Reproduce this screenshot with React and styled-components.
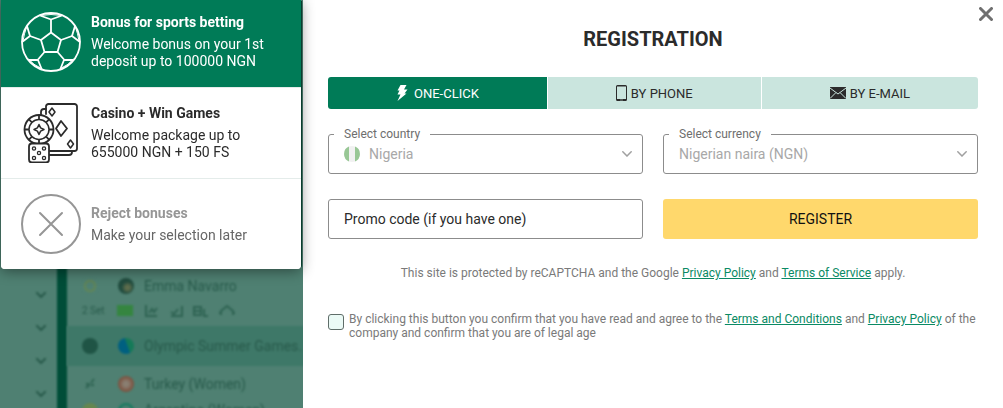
import React from 'react';
import styled, { createGlobalStyle } from 'styled-components';

const GlobalStyle = createGlobalStyle`
  *, *::before, *::after { box-sizing: border-box; }
  body {
    margin: 0;
    background: #fff;
    color: #2b2b2b;
    font: 14px/17px Roboto, "Liberation Sans", sans-serif;
  }
  button, input, select { font: inherit; color: inherit; }
`;

/* ---------- dimmed page behind the dialog ---------- */

const Backdrop = styled.div`
  position: fixed;
  inset: 0;
  z-index: -1;
  display: grid;
  grid-template-columns: 57px 10px 1fr;
  overflow: hidden;
  background: #4f8072;
  color: #285a4b;
`;

const SideNav = styled.div`
  display: flex;
  flex-direction: column;
  align-items: flex-end;
  padding: 278px 4px 0 0;
  filter: blur(1px);
`;

const NavRow = styled.div`
  flex: none;
  width: 24px;
  height: 33px;
  display: flex;
  align-items: center;
  justify-content: center;
`;

const Divider = styled.div`
  background: #004d38;
  filter: blur(1px);
`;

const Matches = styled.div`
  padding-top: 269px;
  filter: blur(1px);
`;

const MatchRow = styled.div`
  height: ${(p) => p.$height}px;
  display: grid;
  grid-template-columns: 16px 16px 1fr;
  column-gap: 20px;
  align-items: center;
  padding-left: 15px;
  background: ${(p) => (p.$active ? '#3e7868' : 'transparent')};
  font-size: 14px;
  white-space: nowrap;
`;

const TeamName = styled.span`
  margin-left: -10px;
`;

const Dot = styled.span`
  width: 16px;
  height: 16px;
  border-radius: 50%;
  background: ${(p) => p.$fill};
`;

const StatRow = styled.div`
  height: 23px;
  display: flex;
  align-items: center;
  gap: 12px;
  padding: 0 0 8px 15px;
  font-size: 10px;
`;

const Badge = styled.span`
  width: 16px;
  height: 11px;
  background: #358540;
`;

/* ---------- dialog ---------- */

const Dialog = styled.div`
  display: grid;
  grid-template-columns: 303px minmax(0, 1fr);
  min-height: 100vh;
`;

const BonusList = styled.div`
  position: relative;
  z-index: 1;
  align-self: start;
  margin: 0 2px 0 1px;
  overflow: hidden;
  border-radius: 0 0 4px 4px;
  background: #fff;
  box-shadow: 2px 0 0 -1px #0a3d2f, 0 2px 14px rgba(0, 0, 0, 0.45);
`;

const BonusOption = styled.button`
  width: 100%;
  min-height: ${(p) => (p.$active ? 87 : 91)}px;
  display: grid;
  grid-template-columns: 60px 1fr;
  column-gap: 10px;
  align-items: center;
  padding: ${(p) => (p.$active ? '0 16px 3px 20px' : '0 16px 0 20px')};
  border: 0;
  background: ${(p) => (p.$active ? '#007b57' : '#fff')};
  color: ${(p) => (p.$active ? '#fff' : p.$muted ? '#666' : '#2b2b2b')};
  text-align: left;
  cursor: pointer;

  & + & { border-top: ${(p) => (p.$muted ? '1px solid #e4ecea' : '0')}; }
`;

const BonusText = styled.span`
  display: grid;
  row-gap: 5px;
`;

const BonusTitle = styled.strong`
  font-weight: 700;
  color: ${(p) => (p.$muted ? '#969696' : 'inherit')};
`;

const Panel = styled.main`
  position: relative;
  padding: 27px 25px;
  background: #fff;
`;

const CloseButton = styled.button`
  position: absolute;
  top: 4px;
  right: 7px;
  width: 20px;
  height: 20px;
  display: grid;
  place-items: center;
  padding: 0;
  border: 0;
  background: none;
  cursor: pointer;
`;

const Title = styled.h1`
  margin: 0 0 26px;
  font-size: 20px;
  line-height: 24px;
  font-weight: 700;
  text-align: center;
`;

const Tabs = styled.div`
  display: flex;
  gap: 1px;
  overflow: hidden;
  border-radius: 3px;
`;

const Tab = styled.button`
  flex: 1 0 auto;
  height: 32px;
  display: flex;
  align-items: center;
  justify-content: center;
  gap: ${(p) => p.$gap}px;
  padding: 0;
  border: 0;
  background: ${(p) => (p.$active ? '#007b57' : '#cae5de')};
  color: ${(p) => (p.$active ? '#fff' : '#2b2b2b')};
  font-size: 13px;
  cursor: pointer;
`;

const Form = styled.form`
  margin-top: 18px;
`;

const Fields = styled.div`
  display: grid;
  grid-template-columns: repeat(2, minmax(0, 1fr));
  gap: 25px 20px;
`;

const SelectBox = styled.fieldset`
  min-width: 0;
  margin: 0;
  padding: 0 10px 6px 15px;
  border: 1px solid #8c8c8c;
  border-radius: 3px;
`;

const Legend = styled.legend`
  margin-left: -10px;
  padding: 0 10px;
  font-size: 12px;
  line-height: 14px;
  color: #6e6e6e;
`;

const SelectRow = styled.div`
  height: 26px;
  display: flex;
  align-items: center;
  gap: 9px;
`;

const Select = styled.select`
  flex: 1;
  min-width: 0;
  padding: 0;
  border: 0;
  outline: 0;
  appearance: none;
  background: none;
  color: #a8a8a8;
`;

const PromoInput = styled.input`
  width: 100%;
  height: 40px;
  padding: 0 15px;
  border: 1px solid #8c8c8c;
  border-radius: 3px;
  background: #fff;
  &::placeholder { color: #2b2b2b; opacity: 1; }
`;

const RegisterButton = styled.button`
  height: 40px;
  border: 0;
  border-radius: 3px;
  background: #ffd86c;
  color: #111;
  cursor: pointer;
`;

const Notice = styled.p`
  margin: 27px 0 32px;
  font-size: 12px;
  line-height: 14px;
  color: #7a7a7a;
  text-align: center;
`;

const Agreement = styled.div`
  display: grid;
  grid-template-columns: 16px 1fr;
  column-gap: 5px;
  font-size: 12px;
  line-height: 14px;
  color: #7a7a7a;
`;

const Checkbox = styled.input`
  appearance: none;
  width: 16px;
  height: 16px;
  margin: 2px 0 0;
  border: 1px solid #5f6d69;
  border-radius: 3px;
  background: #ebfaf6;
`;

const Link = styled.a`
  color: #0a8a64;
  text-decoration: underline;
`;

/* ---------- drawings ---------- */

const BallIcon = () => (
  <svg width="60" height="60" viewBox="0 0 60 60" fill="none" stroke="#fff" strokeWidth="1.800" strokeLinejoin="round" aria-hidden="true">
    <circle cx="30" cy="30" r="29" />
    <path d="M30 20.500l10 7.500-3.500 12h-13L20 28z" />
    <path d="M30 20.500V7.500M40 28l11-4M36.500 40l6.500 7.500M23.500 40L17 47.500M20 28L9 24" />
    <path d="M19 3.500l11 4 11-4" />
    <path d="M54 14l-3 10 8 6M6 14l3 10-8 6" />
    <path d="M52.500 48H43l-4 10M7.500 48H17l4 10" />
    <path d="M19 3.500q11-2 22 0M54 14q3 8 4 15M6 14q-3 8-4 15M52.500 47q-5 6-12 9M7.500 47q5 6 12 9" strokeWidth="1" />
  </svg>
);

const CasinoIcon = () => (
  <svg width="60" height="60" viewBox="0 0 60 60" fill="none" stroke="#2b2b2b" strokeWidth="1.800" strokeLinejoin="round" strokeLinecap="round" aria-hidden="true">
    <path d="M25 11V3.500A2.500 2.500 0 0 1 27.500 1H53.500A2.500 2.500 0 0 1 56 3.500V45.500A2.500 2.500 0 0 1 53.500 48H28" />
    <path d="M25 6h-2a3 3 0 0 0-3 3v3M28 52h20a3 3 0 0 0 3-3" />
    <path d="M40 18l6 7.500-6 7.500-5-7.500z" />
    <path d="M31 5l3 4-3 4-3-4zM49.500 37l3 4-3 4-3-4z" strokeWidth="1.500" />
    <circle cx="18" cy="26.500" r="14.500" fill="#fff" />
    <circle cx="18" cy="26.500" r="10" strokeWidth="1.500" />
    <path d="M18 21.500l1.600 3.400 3.400 1.600-3.400 1.600L18 31.500l-1.600-3.400-3.400-1.600 3.400-1.600z" strokeWidth="1.500" />
    <path d="M18 12v4.500M18 36.500V41M3.500 26.500H8M28 26.500h4.500M7.700 16.200l3.200 3.200M25.100 33.600l3.200 3.200M7.700 36.800l3.200-3.200M25.100 19.400l3.200-3.200" strokeLinecap="butt" />
    <rect x="8" y="40.500" width="20" height="19" rx="3" fill="#fff" />
    <g strokeWidth="1.300">
      <circle cx="13" cy="45.500" r="1.600" />
      <circle cx="23" cy="45.500" r="1.600" />
      <circle cx="18" cy="50" r="1.600" />
      <circle cx="13" cy="55" r="1.600" />
      <circle cx="23" cy="55" r="1.600" />
    </g>
  </svg>
);

const RejectIcon = () => (
  <svg width="60" height="60" viewBox="0 0 60 60" fill="none" stroke="#969696" strokeWidth="2" strokeLinecap="round" aria-hidden="true">
    <circle cx="30" cy="30" r="29" />
    <path d="M19 19l22 22M41 19L19 41" />
  </svg>
);

const BoltIcon = () => (
  <svg width="12" height="16" viewBox="0 0 12 16" fill="currentColor" aria-hidden="true">
    <path d="M4.500 0H10.500L8 4.500H11.500L8.500 8.500h2L1.500 16l3-6.500H1.500L3.500 5.500H1.500z" />
  </svg>
);

const PhoneIcon = () => (
  <svg width="11" height="16" viewBox="0 0 11 16" aria-hidden="true">
    <path fillRule="evenodd" fill="currentColor" d="M1.500 0h8A1.500 1.500 0 0 1 11 1.500v13A1.500 1.500 0 0 1 9.500 16h-8A1.500 1.500 0 0 1 0 14.500v-13A1.500 1.500 0 0 1 1.500 0zM1 1.500V14h9V1.500zM4 14.700v.6h3v-.6z" />
  </svg>
);

const MailIcon = () => (
  <svg width="16" height="12" viewBox="0 0 16 12" aria-hidden="true">
    <rect width="16" height="12" fill="currentColor" />
    <path d="M0 1l8 6 8-6M0 11.500l5.800-5.800M16 11.500l-5.800-5.800" fill="none" stroke="#cae5de" strokeWidth="1" />
  </svg>
);

const CloseIcon = () => (
  <svg width="14" height="14" viewBox="0 0 14 14" aria-hidden="true">
    <path d="M1.500 1.500l11 11M12.500 1.500l-11 11" stroke="#6f6f6f" strokeWidth="3" strokeLinecap="round" />
  </svg>
);

const Chevron = ({ color = '#a0a0a0', width = 1.5 }) => (
  <svg width="10" height="6" viewBox="0 0 10 6" fill="none" stroke={color} strokeWidth={width} strokeLinecap="round" aria-hidden="true">
    <path d="M.8.8L5 5 9.200.8" />
  </svg>
);

const NigeriaFlag = () => (
  <svg width="16" height="16" viewBox="0 0 16 16" aria-hidden="true">
    <circle cx="8" cy="8" r="8" fill="#f1f1f1" />
    <path d="M5 .6a8 8 0 0 0 0 14.800zM11 .6a8 8 0 0 1 0 14.800z" fill="#98c795" />
  </svg>
);

const StatsDrawing = () => (
  <svg width="90" height="12" viewBox="0 0 90 12" fill="none" stroke="#2f6353" strokeWidth="2" aria-hidden="true">
    <path d="M1 0v11h11M4 8l3-4 2 3 3-4M26 11h11V1M26 7l3 2 4-5M49 2h7v8h-7zM49 6h7M59 4v7h4M74 8h3M76 10V6l6-5 6 5v4M87 8h3" />
  </svg>
);

const BONUSES = [
  { id: 'sports', title: 'Bonus for sports betting', text: 'Welcome bonus on your 1st deposit up to 100000 NGN', Icon: BallIcon, active: true },
  { id: 'casino', title: 'Casino + Win Games', text: 'Welcome package up to 655000 NGN + 150 FS', Icon: CasinoIcon },
  { id: 'reject', title: 'Reject bonuses', text: 'Make your selection later', Icon: RejectIcon, muted: true },
];

const TABS = [
  { label: 'ONE-CLICK', Icon: BoltIcon, gap: 6, active: true },
  { label: 'BY PHONE', Icon: PhoneIcon, gap: 4 },
  { label: 'BY E-MAIL', Icon: MailIcon, gap: 4 },
];

function SelectField({ id, label, value, icon }) {
  return (
    <SelectBox>
      <Legend><label htmlFor={id}>{label}</label></Legend>
      <SelectRow>
        {icon}
        <Select id={id} defaultValue={value}>
          <option>{value}</option>
        </Select>
        <Chevron />
      </SelectRow>
    </SelectBox>
  );
}

function PageBehind() {
  return (
    <Backdrop aria-hidden="true">
      <SideNav>
        {[0, 1, 2, 3].map((n) => (
          <NavRow key={n}><Chevron color="#285a4b" width={2} /></NavRow>
        ))}
      </SideNav>
      <Divider />
      <Matches>
        <MatchRow $height={34}>
          <Dot $fill="radial-gradient(#4f8072 30%, #65864f 45%, #4f8072 60%)" />
          <Dot $fill="radial-gradient(circle at 60% 60%, #5d6c4c 15%, #214c3f 45%)" />
          <TeamName>Emma Navarro</TeamName>
        </MatchRow>
        <StatRow>
          2 Set
          <Badge />
          <StatsDrawing />
        </StatRow>
        <MatchRow $height={40} $active>
          <Dot $fill="#1f5445" />
          <Dot $fill="linear-gradient(70deg, #006080 55%, #147a58 60%)" />
          <TeamName>Olympic Summer Games.</TeamName>
        </MatchRow>
        <MatchRow $height={36}>
          <svg width="16" height="16" viewBox="0 0 16 16" fill="none" stroke="#2f6353" strokeWidth="2">
            <path d="M4 12l4-4M9 7l3-4M4 8h3M9 9h3" />
          </svg>
          <Dot $fill="radial-gradient(#8a7f72 20%, #7c5240 65%)" />
          <TeamName>Turkey (Women)</TeamName>
        </MatchRow>
        <MatchRow $height={16}>
          <Dot $fill="#65864f" />
          <Dot $fill="radial-gradient(#4f8072 40%, #17795f 60%)" />
          <TeamName>Argentina (Women)</TeamName>
        </MatchRow>
      </Matches>
    </Backdrop>
  );
}

export default function App() {
  return (
    <>
      <GlobalStyle />
      <PageBehind />
      <Dialog role="dialog" aria-labelledby="registration-title">
        <BonusList>
          {BONUSES.map(({ id, title, text, Icon, active, muted }) => (
            <BonusOption key={id} type="button" $active={active} $muted={muted} aria-pressed={!!active}>
              <Icon />
              <BonusText>
                <BonusTitle $muted={muted}>{title}</BonusTitle>
                <span>{text}</span>
              </BonusText>
            </BonusOption>
          ))}
        </BonusList>

        <Panel>
          <CloseButton type="button" aria-label="Close"><CloseIcon /></CloseButton>
          <Title id="registration-title">REGISTRATION</Title>
          <Tabs>
            {TABS.map(({ label, Icon, gap, active }) => (
              <Tab key={label} type="button" $active={active} $gap={gap} aria-pressed={!!active}>
                <Icon />
                {label}
              </Tab>
            ))}
          </Tabs>
          <Form onSubmit={(e) => e.preventDefault()}>
            <Fields>
              <SelectField id="country" label="Select country" value="Nigeria" icon={<NigeriaFlag />} />
              <SelectField id="currency" label="Select currency" value="Nigerian naira (NGN)" />
              <PromoInput aria-label="Promo code" placeholder="Promo code (if you have one)" />
              <RegisterButton type="submit">REGISTER</RegisterButton>
            </Fields>
            <Notice>
              This site is protected by reCAPTCHA and the Google <Link href="#privacy">Privacy Policy</Link> and{' '}
              <Link href="#service">Terms of Service</Link> apply.
            </Notice>
            <Agreement>
              <Checkbox id="agree" type="checkbox" />
              <label htmlFor="agree">
                By clicking this button you confirm that you have read and agree to the{' '}
                <Link href="#terms">Terms and Conditions</Link> and <Link href="#privacy">Privacy Policy</Link> of the
                company and confirm that you are of legal age
              </label>
            </Agreement>
          </Form>
        </Panel>
      </Dialog>
    </>
  );
}
